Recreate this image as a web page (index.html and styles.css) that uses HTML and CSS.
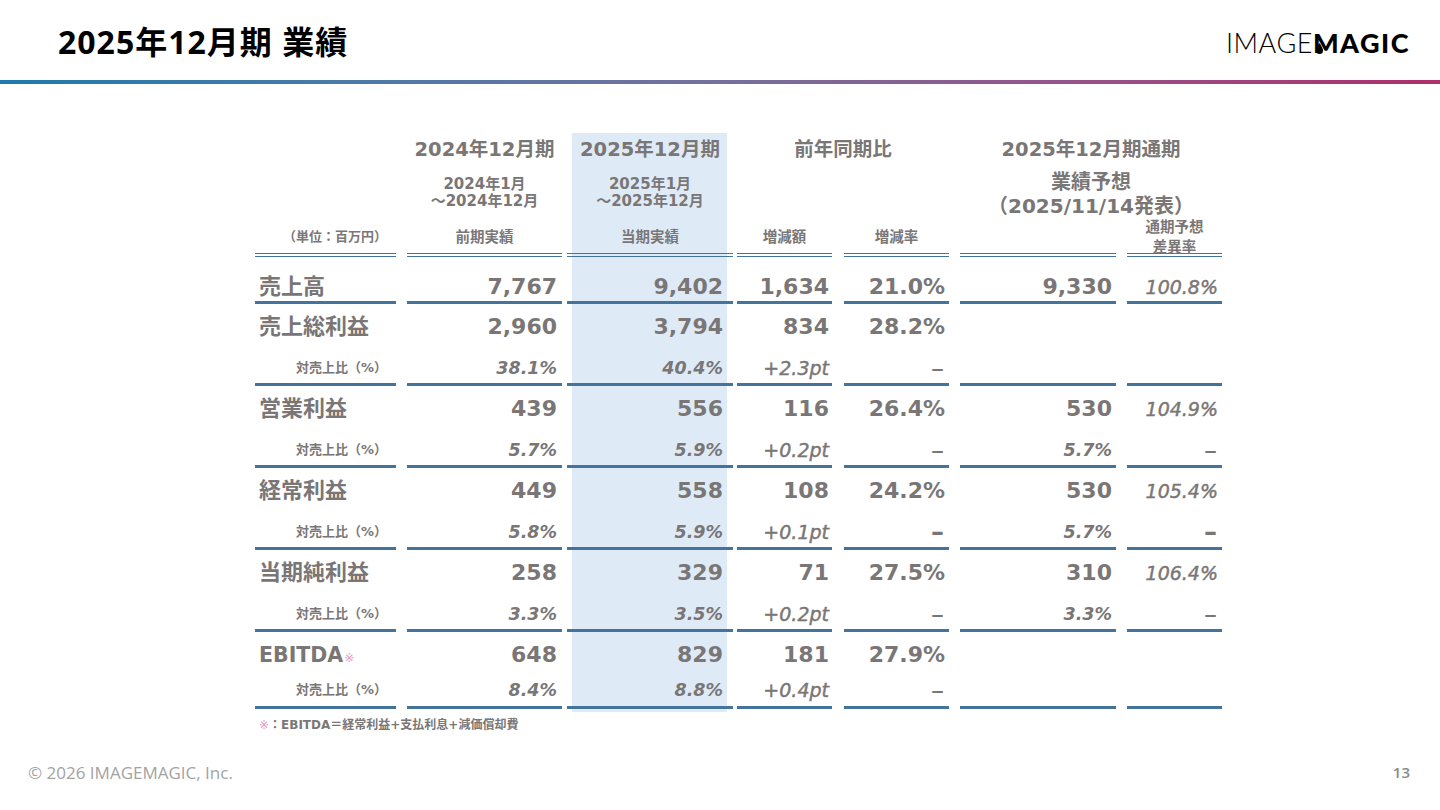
FILE: index.html
```html
<!DOCTYPE html>
<html lang="ja">
<head>
<meta charset="utf-8">
<title>2025年12月期 業績</title>
<link rel="stylesheet" href="styles.css">
</head>
<body>
<div class="slide">
  <header class="top">
    <h1 class="title">2025年12月期 業績</h1>
    <div class="logo"><span class="logo-light">IMAGE</span><span class="logo-bold"><span class="logo-m">M<svg class="drop" viewBox="0 0 7 11"><path d="M3.5 0C3.5 0 7 5.2 7 7.5A3.5 3.5 0 0 1 0 7.5C0 5.2 3.5 0 3.5 0Z" fill="#000"/></svg></span>AGIC</span></div>
  </header>
  <div class="bar"></div>
  <main class="content">
    <div class="table">
      <div class="row hrow1">
        <div class="h1c"></div>
        <div class="h1c c1"><div class="hbig">2024年12月期</div><div class="hsub">2024年1月<br>～2024年12月</div></div>
        <div class="h1c c2"><div class="hbig">2025年12月期</div><div class="hsub">2025年1月<br>～2025年12月</div></div>
        <div class="h1c span2 c34"><div class="hbig">前年同期比</div></div>
        <div class="h1c span2 c56"><div class="hbig">2025年12月期通期</div><div class="hmid first">業績予想</div><div class="hmid">（2025/11/14発表）</div></div>
      </div>
      <div class="row hrow2">
        <div class="unit">（単位：百万円）</div>
        <div>前期実績</div>
        <div>当期実績</div>
        <div>増減額</div>
        <div>増減率</div>
        <div></div>
        <div class="two"><div>通期予想<br>差異率</div></div>
      </div>

      <div class="row r-top">
        <div>売上高</div><div>7,767</div><div>9,402</div><div>1,634</div><div>21.0%</div><div>9,330</div><div class="it">100.8%</div>
      </div>

      <div class="row r-main">
        <div>売上総利益</div><div>2,960</div><div>3,794</div><div>834</div><div>28.2%</div><div></div><div></div>
      </div>
      <div class="row r-ratio">
        <div>対売上比（%）</div><div>38.1%</div><div>40.4%</div><div>+2.3pt</div><div class="dash">–</div><div></div><div></div>
      </div>

      <div class="row r-main">
        <div>営業利益</div><div>439</div><div>556</div><div>116</div><div>26.4%</div><div>530</div><div class="it">104.9%</div>
      </div>
      <div class="row r-ratio">
        <div>対売上比（%）</div><div>5.7%</div><div>5.9%</div><div>+0.2pt</div><div class="dash">–</div><div>5.7%</div><div class="dash">–</div>
      </div>

      <div class="row r-main">
        <div>経常利益</div><div>449</div><div>558</div><div>108</div><div>24.2%</div><div>530</div><div class="it">105.4%</div>
      </div>
      <div class="row r-ratio">
        <div>対売上比（%）</div><div>5.8%</div><div>5.9%</div><div>+0.1pt</div><div class="dash bold">–</div><div>5.7%</div><div class="dash bold">–</div>
      </div>

      <div class="row r-main">
        <div>当期純利益</div><div>258</div><div>329</div><div>71</div><div>27.5%</div><div>310</div><div class="it">106.4%</div>
      </div>
      <div class="row r-ratio">
        <div>対売上比（%）</div><div>3.3%</div><div>3.5%</div><div>+0.2pt</div><div class="dash">–</div><div>3.3%</div><div class="dash">–</div>
      </div>

      <div class="row r-emain">
        <div class="ebitda">EBITDA<span class="mark">※</span></div><div>648</div><div>829</div><div>181</div><div>27.9%</div><div></div><div></div>
      </div>
      <div class="row r-ratio r-eratio">
        <div>対売上比（%）</div><div>8.4%</div><div>8.8%</div><div>+0.4pt</div><div class="dash">–</div><div></div><div></div>
      </div>
      <div class="tail"></div>
    </div>
    <p class="note"><span class="mark">※</span>：EBITDA＝経常利益+支払利息+減価償却費</p>
  </main>
  <footer class="foot">
    <span class="copy">© 2026 IMAGEMAGIC, Inc.</span>
    <span class="page">13</span>
  </footer>
</div>
</body>
</html>
```

FILE: styles.css
```css
* { box-sizing: border-box; }
body { margin: 0; background: #fff; }

.slide {
  width: 1440px;
  height: 810px;
  display: flex;
  flex-direction: column;
  overflow: hidden;
  background: #fff;
  font-family: "DejaVu Sans", "Noto Sans CJK JP", sans-serif;
  color: #7a7676;
}

/* header */
.top {
  height: 80px;
  flex: none;
  display: flex;
  align-items: center;
  justify-content: space-between;
  padding: 4px 30px 0 58px;
}
.title {
  margin: 0;
  font-family: "Noto Sans", "Noto Sans CJK JP", sans-serif;
  font-weight: 700;
  font-size: 32px;
  letter-spacing: 1px;
  line-height: 1;
  color: #000;
}
.logo {
  font-family: Lato, "DejaVu Sans", sans-serif;
  font-size: 27px;
  line-height: 1;
  color: #000;
  white-space: nowrap;
}
.logo-light { font-weight: 300; letter-spacing: 0.5px; }
.logo-bold { font-weight: 900; letter-spacing: 1.5px; }
.logo-m { position: relative; }
.drop {
  position: absolute;
  left: 3px;
  bottom: 5px;
  width: 7px;
  height: 11px;
}

.bar {
  height: 4px;
  flex: none;
  background: linear-gradient(90deg, #1f7aab 0%, #4c7aa8 25%, #75709d 50%, #96528b 75%, #ad2f6c 100%);
}

/* table */
.content { padding-top: 49px; }

.table {
  display: grid;
  grid-template-columns: 152px 160px 170px 107px 116px 167px 95px;
  grid-template-rows: 85px 39px 47px 40px 42px 40px 42px 40px 42px 40px 42px 38px 39px;
  grid-auto-rows: 3px;
  width: 967px;
  margin-left: 255px;
}

.row { display: contents; }
.row > div {
  display: flex;
  align-items: center;
  justify-content: flex-end;
  white-space: nowrap;
}
.row > div:nth-child(1) { margin-right: 11px; }
.row > div:nth-child(2) { margin-right: 5px; padding-right: 5px; }
.row > div:nth-child(3) { margin-right: 4px; padding-right: 10px; }
.row > div:nth-child(4) { margin-right: 12px; padding-right: 3px; }
.row > div:nth-child(5) { margin-right: 11px; padding-right: 4px; }
.row > div:nth-child(6) { margin-right: 11px; padding-right: 4px; }
.row > div:nth-child(7) { padding-right: 4px; }

/* highlighted current-period column */
.row > div:nth-child(3),
.tail {
  background: linear-gradient(#deebf7, #deebf7) 5px 0 / calc(100% - 11px) 100% no-repeat border-box;
}
.tail { grid-column: 3; margin-right: 4px; }

/* header row 1 */
.hrow1 > div.h1c {
  flex-direction: column;
  align-items: center;
  justify-content: flex-start;
  padding-right: 0;
  font-weight: 700;
}
.hrow1 > div.span2 { grid-column: span 2; }
.hrow1 > div.c34 { margin-right: 11px; }
.hrow1 > div.c56 { margin-right: 0; }
.hbig { font-size: 19.5px; line-height: 34px; }
.hsub { font-size: 15px; line-height: 17px; margin-top: 8.5px; text-align: center; }
.hmid { font-size: 20px; line-height: 24px; }
.hmid.first { margin-top: 3px; }

/* header row 2 */
.hrow2 > div {
  border-bottom: 4px double #44739b;
  font-weight: 700;
  font-size: 14.5px;
}
.hrow2 > div:nth-child(n+2) { justify-content: center; padding-right: 0; }
.hrow2 > div.unit { font-size: 13px; padding-right: 9px; }
.hrow2 > div.two { align-items: flex-end; }
.hrow2 > div.two > div {
  line-height: 20px;
  margin-bottom: -4px;
  text-align: center;
}

/* body rows */
.r-top > div,
.r-main > div { font-size: 22px; font-weight: 700; }
.r-top > div { padding-top: 15px; border-bottom: 3px solid #44739b; }
.r-main > div { padding-top: 5px; }
.r-top > div:nth-child(1),
.r-main > div:nth-child(1) { justify-content: flex-start; padding-left: 4px; padding-bottom: 6px; }

.r-emain > div { font-size: 22px; font-weight: 700; padding-top: 6px; }
.r-emain > div:nth-child(1) { justify-content: flex-start; padding-left: 4px; }
.r-emain > div.ebitda { font-size: 20.5px; align-items: baseline; padding-top: 11px; }

.it { font-style: italic; }
.r-top > div.it,
.r-main > div.it {
  font-size: 19px;
  font-weight: 400;
  -webkit-text-stroke: 0.45px #7a7676;
}

.r-ratio > div {
  padding-top: 8px;
  border-bottom: 3px solid #44739b;
  font-size: 17.5px;
  font-weight: 700;
  font-style: italic;
}
.r-ratio > div:nth-child(1) {
  font-size: 13px;
  font-style: normal;
  padding-right: 9px;
  padding-bottom: 3px;
}
.r-ratio > div:nth-child(4) {
  font-size: 19px;
  font-weight: 400;
  -webkit-text-stroke: 0.45px #7a7676;
}
.r-ratio > div.dash {
  font-size: 26px;
  font-weight: 400;
  font-style: normal;
  padding-right: 5px;
}
.r-ratio > div.dash.bold { font-weight: 700; }
.r-ratio.r-eratio > div { padding-top: 3px; }

.mark { color: #e899bd; font-weight: 400; }
.ebitda .mark { font-size: 12px; margin-left: 1px; }

.note {
  margin: 5px 0 0 259px;
  font-size: 12px;
  line-height: 16px;
  font-weight: 700;
}

/* footer */
.foot {
  margin-top: auto;
  display: flex;
  justify-content: space-between;
  align-items: center;
  height: 24px;
  margin-bottom: 26px;
  padding: 0 30px 0 28px;
  font-family: "Open Sans", sans-serif;
}
.copy { font-size: 17px; color: #a3a3a3; }
.page { font-size: 15px; font-weight: 600; color: #8a8a8a; }
```
